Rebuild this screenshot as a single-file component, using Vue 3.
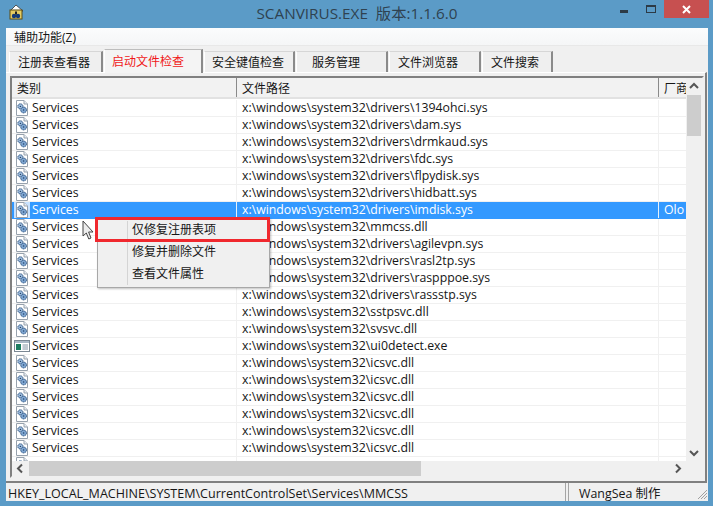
<script setup>
const base = 'x:\\windows\\system32\\'
const rows = [
  ['svc', 'drivers\\1394ohci.sys'], ['svc', 'drivers\\dam.sys'], ['svc', 'drivers\\drmkaud.sys'],
  ['svc', 'drivers\\fdc.sys'], ['svc', 'drivers\\flpydisk.sys'], ['svc', 'drivers\\hidbatt.sys'],
  ['svc', 'drivers\\imdisk.sys', 'Olo', true], ['svc', 'mmcss.dll'], ['svc', 'drivers\\agilevpn.sys'],
  ['svc', 'drivers\\rasl2tp.sys'], ['svc', 'drivers\\raspppoe.sys'], ['svc', 'drivers\\rassstp.sys'],
  ['svc', 'sstpsvc.dll'], ['svc', 'svsvc.dll'], ['app', 'ui0detect.exe'],
  ['svc', 'icsvc.dll'], ['svc', 'icsvc.dll'], ['svc', 'icsvc.dll'], ['svc', 'icsvc.dll'], ['svc', 'icsvc.dll'], ['svc', 'icsvc.dll'], ['svc', '']
].map(([kind, path, vendor, selected]) => ({ kind, path: path ? base + path : '', vendor: vendor || '', selected: !!selected }))
const tabs = [
  { label: '注册表查看器', w: 94, pad: 8 }, { label: '启动文件检查', w: 99, pad: 7, active: true }, { label: '安全键值检查', w: 91, pad: 7 },
  { label: '服务管理', w: 92, pad: 15 }, { label: '文件浏览器', w: 92, pad: 8 }, { label: '文件搜索', w: 71, pad: 8 }
]
</script>

<template>
  <div class="win">
    <header class="title">
      <svg class="appicon" width="18" height="18" viewBox="0 0 18 18">
        <path d="M9 2 L16 8 L3 8 Z" fill="#fff" stroke="#333" stroke-width=".8"/>
        <rect x="3" y="7" width="12" height="9" fill="#e6cd62" stroke="#5c4c12"/>
        <circle cx="7" cy="13" r="2.2" fill="#123a7a"/><circle cx="11" cy="13" r="2.2" fill="#123a7a"/>
        <rect x="8" y="8.5" width="2" height="3" fill="#222"/>
      </svg>
      <span class="title-text">SCANVIRUS.EXE&nbsp;&nbsp;版本:1.1.6.0</span>
      <div class="caption">
        <svg class="cap-min" width="8" height="3"><rect width="8" height="3" fill="#2c3a46"/></svg>
        <svg class="cap-max" width="10" height="8"><rect x=".5" y=".5" width="9" height="7" fill="none" stroke="#2c3a46"/><rect width="10" height="2" fill="#2c3a46"/></svg>
        <div class="cap-close">
          <svg width="9" height="9" viewBox="0 0 9 9"><path d="M1 1 L8 8 M8 1 L1 8" stroke="#fff" stroke-width="2"/></svg>
        </div>
      </div>
    </header>

    <div class="client">
      <div class="menubar">辅助功能(Z)</div>
      <nav class="tabs">
        <div v-for="t in tabs" :key="t.label" class="tab" :class="{ active: t.active }" :style="{ width: t.w + 'px', paddingLeft: t.pad + 'px' }">{{ t.label }}</div>
      </nav>

      <section class="panel">
        <div class="list">
          <div class="listmain">
            <div class="head">
              <div class="c1 hc">类别</div>
              <div class="c2 hc">文件路径</div>
              <div class="c3 hc">厂商</div>
            </div>
            <div class="body">
              <div v-for="(r, i) in rows" :key="i" class="row" :class="{ sel: r.selected }">
                <div class="c1 cell">
                  <svg v-if="r.kind === 'svc'" class="ic" width="16" height="16" viewBox="0 0 16 16">
                    <path d="M2.5 .5 H10 L13.5 4 V15.5 H2.5 Z" fill="#fff" stroke="#98a2ad"/>
                    <path d="M10 .5 V4 H13.5" fill="#e8edf2" stroke="#98a2ad"/>
                    <circle cx="6.4" cy="6.4" r="2.6" fill="#9dbbdd" stroke="#2f5580" stroke-dasharray="1.4 .6"/>
                    <circle cx="9.6" cy="10" r="2.9" fill="#7fa6d2" stroke="#2f5580" stroke-dasharray="1.4 .6"/>
                    <circle cx="6.4" cy="6.4" r=".7" fill="#24466c"/><circle cx="9.6" cy="10" r=".8" fill="#24466c"/>
                  </svg>
                  <svg v-else class="ic" width="16" height="16" viewBox="0 0 16 16">
                    <rect x=".5" y="2.5" width="15" height="11" fill="#fff" stroke="#7b8894"/>
                    <rect x="1" y="3" width="14" height="2" fill="#aab8c6"/>
                    <rect x="2" y="6" width="5" height="6" fill="#1e7d62"/>
                    <path d="M8.5 7H14M8.5 9H14M8.5 11H14" stroke="#8494a4"/>
                  </svg>
                  <span v-if="r.path" class="svc">Services</span>
                </div>
                <div class="c2 cell">{{ r.path }}</div>
                <div class="c3 cell">{{ r.vendor }}</div>
              </div>
            </div>
          </div>
          <div class="vbar">
            <svg class="arr" width="16" height="17" viewBox="0 0 16 17"><path d="M4 10 L8 6 L12 10" fill="none" stroke="#555" stroke-width="2"/></svg>
            <div class="vtrack"><div class="vthumb"></div></div>
            <svg class="arr" width="16" height="17" viewBox="0 0 16 17"><path d="M4 7 L8 11 L12 7" fill="none" stroke="#555" stroke-width="2"/></svg>
          </div>
          <div class="hbar">
            <svg class="arr" width="17" height="15" viewBox="0 0 17 15"><path d="M10 3.5 L6 7.5 L10 11.5" fill="none" stroke="#555" stroke-width="2"/></svg>
            <div class="htrack"><div class="hthumb"></div></div>
            <svg class="arr" width="17" height="15" viewBox="0 0 17 15"><path d="M7 3.5 L11 7.5 L7 11.5" fill="none" stroke="#555" stroke-width="2"/></svg>
          </div>
          <div class="corner"></div>
        </div>
      </section>

      <footer class="status">
        <div class="st-left">HKEY_LOCAL_MACHINE\SYSTEM\CurrentControlSet\Services\MMCSS</div>
        <div class="st-right">WangSea 制作</div>
        <svg class="grip" width="12" height="12" viewBox="0 0 12 12"><path d="M11 2 L2 11 M11 5 L5 11 M11 8 L8 11" stroke="#a0a0a0"/></svg>
      </footer>
    </div>

    <div class="ctx">
      <div class="ctx-item">仅修复注册表项</div>
      <div class="ctx-item">修复并删除文件</div>
      <div class="ctx-item">查看文件属性</div>
    </div>
    <div class="redbox"></div>
    <svg class="cursor" width="13" height="21" viewBox="0 0 13 21">
      <path d="M1 1 V16 L4.3 13 L6.8 19 L9 18 L6.6 12 H11 Z" fill="#ececec" stroke="#444" stroke-width="1"/>
    </svg>
  </div>
</template>

<style>
html, body { margin: 0; padding: 0; background: #5a9bc8; }
</style>

<style scoped>
.win {
  position: relative; width: 713px; height: 506px; overflow: hidden;
  background: #5b9bc7; box-sizing: border-box; padding: 0 5px 5px 6px;
  display: flex; flex-direction: column;
  font-family: "Open Sans", "Noto Sans CJK SC", sans-serif; font-size: 12px; color: #161616;
}
.title { height: 28px; flex: none; position: relative; display: flex; align-items: center; justify-content: center; }
.appicon { position: absolute; left: 1px; top: 3px; }
.title-text { font-size: 15.3px; color: #2f4250; margin-top: -5px; }
.caption { position: absolute; right: -1px; top: 0; display: flex; align-items: flex-start; }
.cap-min { margin: 10px 18px 0 0; }
.cap-max { margin: 5px 8px 0 0; }
.cap-close { width: 45px; height: 18px; background: #c75050; display: flex; align-items: center; justify-content: center; }
.client { flex: 1; display: flex; flex-direction: column; background: #f0f0f0; min-height: 0; }
.menubar { height: 18px; flex: none; box-sizing: border-box; background: linear-gradient(#fbfcfd, #f5f6f7); line-height: 19px; padding-left: 8px; border-bottom: 1px solid #e8e8e8; }
.tabs { display: flex; height: 26px; flex: none; padding-left: 3px; box-sizing: border-box; align-items: flex-end; }
.tab {
  height: 21px; box-sizing: border-box; background: #efefef; line-height: 22px;
  border-top: 1px solid #d6d6d6; border-left: 1px solid #fff; border-right: 2px solid #8a8a8a; flex: none; margin-right: 1px; white-space: nowrap;
}
.tab.active { height: 24px; color: #f01818; background: #f4f4f4; line-height: 24px; border-top: 1px solid #bdbdbd; margin-bottom: -1px; position: relative; z-index: 1; }
.panel { flex: 1; min-height: 0; padding: 0 1px 0 4px; margin-right: 1px; border-top: 1px solid #fff; border-right: 2px solid #808080; display: flex; border-bottom: 2px solid #808080; box-sizing: border-box; }
.list {
  flex: 1; min-width: 0; box-sizing: border-box; margin: 3px 0 3px; border: 2px solid #808080; border-right-color: #f0f0f0; border-bottom-color: #f0f0f0; background: #fff;
  display: grid; grid-template-columns: 1fr 16px; grid-template-rows: 1fr 15px; overflow: hidden;
}
.listmain { overflow: hidden; min-height: 0; min-width: 0; }
.head { display: flex; background: #f2f2f2; border-bottom: 2px solid #e2e2e2; height: 19px; margin-bottom: 1px; }
.c1 { width: 225px; flex: none; box-sizing: border-box; }
.c2 { width: 422px; flex: none; box-sizing: border-box; }
.c3 { flex: 1; min-width: 0; box-sizing: border-box; overflow: hidden; white-space: nowrap; }
.hc { padding-left: 5px; line-height: 21px; height: 19px; border-right: 1px solid #8a8a8a; }
.hc.c3 { border-right: 0; }
.row { display: flex; height: 17px; box-sizing: border-box; border-bottom: 1px solid #f0f0f0; font-size: 12.3px; }
.cell { height: 16px; line-height: 16px; display: flex; align-items: center; padding-left: 5px; border-right: 1px solid #f0f0f0; overflow: hidden; white-space: nowrap; }
.c1.cell { padding-left: 2px; }
.c3.cell { border-right: 0; }
.ic { flex: none; margin-right: 2px; }
.sel { background: #3399ff; color: #fff; border-bottom-color: #3399ff; }
.sel .cell { border-right-color: #e4f0fb; }
.sel .c1 { background: #3399ff; }
.sel .c1 .ic { background: #c8e2ff; }
.vbar { background: #f0f0f0; display: flex; flex-direction: column; }
.vtrack { flex: 1; padding: 0 1px; }
.vthumb { height: 41px; background: #cdcdcd; }
.hbar { background: #f0f0f0; display: flex; }
.htrack { flex: 1; }
.hthumb { width: 392px; height: 15px; background: #cdcdcd; }
.corner { background: #f0f0f0; }
.status { height: 18px; flex: none; position: relative; display: flex; line-height: 21px; box-sizing: border-box; overflow: hidden; }
.st-left { flex: 1; min-width: 0; padding-left: 2px; border-right: 1px solid #a5a5a5; margin-right: 2px; font-size: 12.55px; white-space: nowrap; overflow: hidden; }
.st-right { width: 140px; box-sizing: border-box; flex: none; padding-left: 10px; border-left: 1px solid #a5a5a5; font-size: 12.4px; white-space: nowrap; }
.grip { position: absolute; right: 0; bottom: 1px; }
.ctx {
  position: absolute; left: 97px; top: 218px; width: 173px; height: 70px; box-sizing: border-box;
  background: #f0f0f0; border: 1px solid #a8a8a8; padding: 1px 0 0 29px; box-shadow: 1px 1px 2px rgba(0,0,0,.25);
}
.ctx::before { content: ""; position: absolute; left: 29px; top: 2px; bottom: 2px; width: 1px; background: #d4d4d4; }
.ctx-item { height: 22px; line-height: 20px; padding-left: 5px; }
.redbox { position: absolute; left: 95px; top: 217px; width: 175px; height: 25px; box-sizing: border-box; border: 3px solid #f0282e; }
.cursor { position: absolute; left: 82px; top: 220px; }
</style>
